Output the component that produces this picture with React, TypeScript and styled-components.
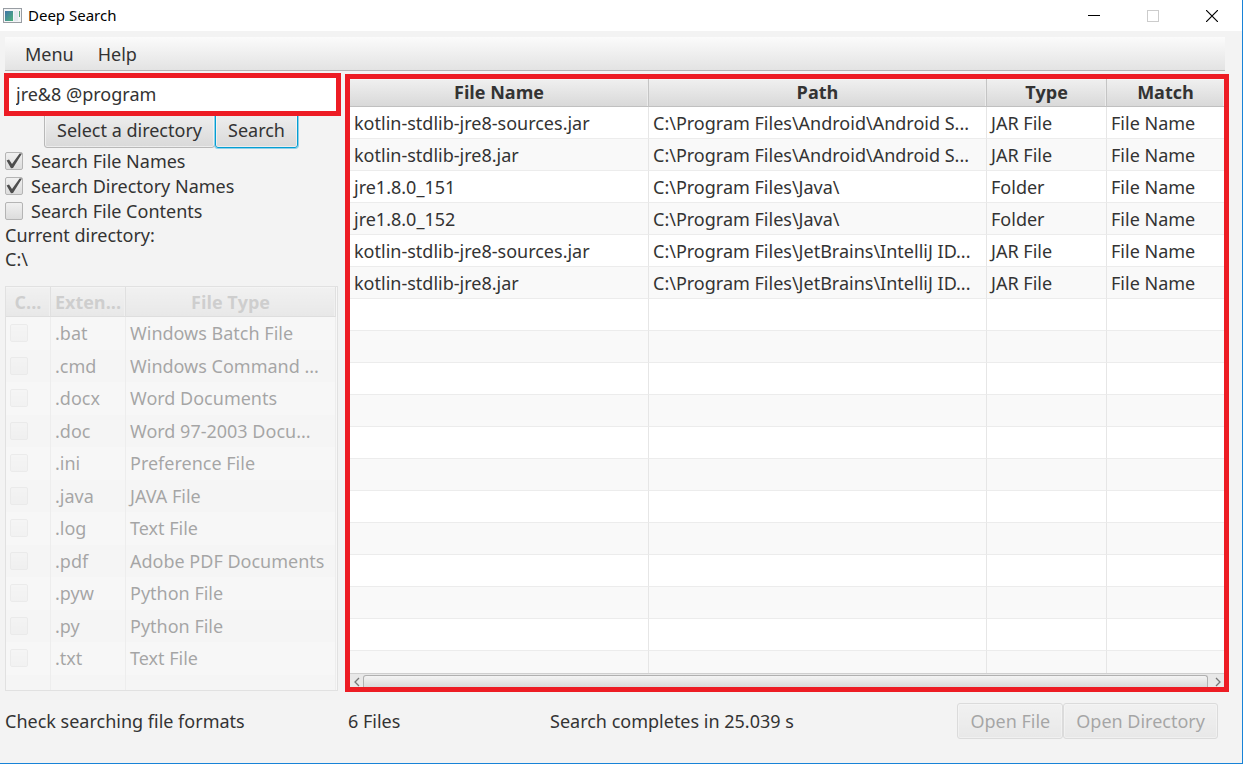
import React from "react";
import styled, { createGlobalStyle, css } from "styled-components";

const GlobalStyle = createGlobalStyle`
  *, *::before, *::after { box-sizing: border-box; }
  body { margin: 0; background: #f3f3f3; }
  button, input { font: inherit; color: inherit; }
`;

const Window = styled.div`
  display: flex;
  flex-direction: column;
  min-height: 100vh;
  border: solid #1883d7;
  border-width: 0 1px 1px 0;
  background: #f3f3f3;
  color: #333;
  font-family: "Noto Sans", "Open Sans", sans-serif;
  font-size: 18px;
  line-height: 24px;
`;

const TitleBar = styled.header`
  display: flex;
  align-items: center;
  height: 31px;
  padding: 0 1px 0 3px;
  background: #fff;
  color: #000;
`;

const Title = styled.h1`
  flex: 1;
  margin: 0 0 0 6px;
  padding-bottom: 2px;
  font-size: 15px;
  font-weight: 400;
  line-height: 20px;
`;

const CaptionButton = styled.button`
  display: flex;
  align-items: center;
  justify-content: center;
  width: 59px;
  height: 31px;
  padding: 0;
  border: 0;
  background: none;
`;

const MenuBar = styled.nav`
  display: flex;
  align-items: center;
  gap: 24px;
  height: 34px;
  margin: 6px 17px 0 5px;
  padding-left: 20px;
  border-bottom: 1px solid #b5b5b5;
  background: linear-gradient(#fbfbfb, #e3e3e3);
`;

const MenuButton = styled.button`
  padding: 0;
  border: 0;
  background: none;
`;

const Workspace = styled.main`
  display: flex;
  align-items: flex-start;
  gap: 4px;
  padding: 2px 13px 0 4px;
`;

const SearchPanel = styled.section`
  display: flex;
  flex-direction: column;
  flex: none;
  width: 337px;
`;

const SearchInput = styled.input`
  position: relative;
  z-index: 1;
  width: 100%;
  height: 43px;
  padding: 0 7px 2px;
  border: 5px solid #ed1c24;
  border-radius: 0;
  background: #fff;
  outline: none;
`;

const ButtonRow = styled.div`
  display: flex;
  margin: -4px 0 0 40px;
`;

const PushButton = styled.button<{ $focused?: boolean }>`
  height: 36px;
  padding: 0 12px;
  border: 1px solid #b8b8b8;
  border-radius: 3px;
  background: linear-gradient(#efefef, #d9d9d9);
  box-shadow: inset 0 0 0 1px #ffffff80;
  white-space: nowrap;

  ${(p) =>
    p.$focused &&
    css`
      border-color: #039ed3;
      box-shadow: 0 0 0 1px #8fd0e8, inset 0 0 0 1px #ffffff80;
    `}

  &:disabled {
    opacity: 0.4;
  }
`;

const CheckLabel = styled.label`
  display: flex;
  align-items: center;
  gap: 8px;
  height: 25px;
  margin-left: 1px;
`;

const BoxWrap = styled.span`
  position: relative;
  display: block;
  width: 18px;
  height: 18px;
`;

const Box = styled.input`
  display: block;
  appearance: none;
  width: 18px;
  height: 18px;
  margin: 0;
  border: 1px solid #b4b4b4;
  border-radius: 2px;
  background: linear-gradient(#f0f0f0, #dcdcdc);

  & + svg {
    position: absolute;
    inset: 0;
    display: none;
    pointer-events: none;
  }
  &:checked + svg {
    display: block;
  }
  &:disabled {
    opacity: 0.4;
  }
`;

const Info = styled.p`
  margin: 0 0 0 1px;
`;

const FormatsFrame = styled.div`
  margin: 15px 3px 0 1px;
  padding-right: 1px;
  border: 1px solid #c8c8c8;
  background: #fff;
  opacity: 0.4;
`;

const Table = styled.table`
  width: 100%;
  table-layout: fixed;
  border-collapse: separate;
  border-spacing: 0;

  th,
  td {
    overflow: hidden;
    white-space: nowrap;
    border-right: 1px solid #e6e6e6;
  }
  th {
    padding: 0;
    border-right-color: #c4c4c4;
    border-bottom: 1px solid #c0c0c0;
    background: linear-gradient(#f0f0f0, #d9d9d9);
    box-shadow: inset 0 1px 0 #f6f6f6, inset -1px 0 0 #ececec;
    font-family: "Open Sans", "Noto Sans", sans-serif;
    font-weight: 700;
  }
  td {
    padding: 0 4px;
    text-align: left;
  }
  tbody tr {
    background: #fff;
  }
  tbody tr:nth-child(even) {
    background: #f9f9f9;
  }
`;

const FormatsTable = styled(Table)`
  th {
    height: 30px;
    color: #999;
  }
  tbody tr {
    height: 32px;
  }
  tbody tr:nth-child(odd) {
    height: 33px;
  }
  tbody tr:nth-child(odd) td {
    padding-bottom: 1px;
  }
  tbody tr:last-child {
    height: 15px;
  }
`;

const ResultsPanel = styled.section`
  flex: 1;
  min-width: 0;
  margin-top: 1px;
  border: 5px solid #ed1c24;
`;

const ResultsTable = styled(Table)`
  th {
    height: 28px;
    padding-bottom: 2px;
  }
  tbody tr {
    height: 32px;
  }
  tbody td {
    border-bottom: 1px solid #ececec;
  }
  tbody tr:last-child {
    height: 22px;
  }
  tbody tr:last-child td {
    border-bottom: 0;
  }
  th:last-child,
  td:last-child {
    border-right: 0;
  }
`;

const Col = styled.col<{ $width?: number }>`
  width: ${(p) => (p.$width ? `${p.$width}px` : "auto")};
`;

const ScrollBar = styled.div`
  display: flex;
  height: 14px;
  border-top: 1px solid #cfcfcf;
  background: #e8e8e8;
`;

const ScrollArrow = styled.button`
  display: flex;
  align-items: center;
  justify-content: center;
  width: 13px;
  padding: 3px 0 0;
  border: 0;
  background: none;
`;

const ScrollThumb = styled.div`
  flex: 1;
  margin: 1px 3px 0 0;
  border: 1px solid #b0b0b0;
  border-bottom: 0;
  border-radius: 3px 3px 0 0;
  background: linear-gradient(#f4f4f4, #dadada);
`;

const StatusBar = styled.footer`
  display: grid;
  grid-template-columns: 343px 202px 1fr auto;
  align-items: center;
  margin-top: 11px;
  padding: 0 24px 24px 5px;
`;

const Actions = styled.div`
  display: flex;
`;

const Tick = () => (
  <svg width="18" height="18" viewBox="0 0 18 18" aria-hidden="true">
    <path d="M1.6 8.4 L4 7.6 L7 12 L14.6 1.6 L17 1.4 L8 16 L6 16.2 Z" fill="#4d4d4d" />
  </svg>
);

function Check({ label, checked }: { label: string; checked?: boolean }) {
  return (
    <CheckLabel>
      <BoxWrap>
        <Box type="checkbox" defaultChecked={checked} />
        <Tick />
      </BoxWrap>
      {label}
    </CheckLabel>
  );
}

const formats = [
  [".bat", "Windows Batch File"],
  [".cmd", "Windows Command ..."],
  [".docx", "Word Documents"],
  [".doc", "Word 97-2003 Docu..."],
  [".ini", "Preference File"],
  [".java", "JAVA File"],
  [".log", "Text File"],
  [".pdf", "Adobe PDF Documents"],
  [".pyw", "Python File"],
  [".py", "Python File"],
  [".txt", "Text File"],
];

const results = [
  ["kotlin-stdlib-jre8-sources.jar", "C:\\Program Files\\Android\\Android S...", "JAR File", "File Name"],
  ["kotlin-stdlib-jre8.jar", "C:\\Program Files\\Android\\Android S...", "JAR File", "File Name"],
  ["jre1.8.0_151", "C:\\Program Files\\Java\\", "Folder", "File Name"],
  ["jre1.8.0_152", "C:\\Program Files\\Java\\", "Folder", "File Name"],
  ["kotlin-stdlib-jre8-sources.jar", "C:\\Program Files\\JetBrains\\IntelliJ ID...", "JAR File", "File Name"],
  ["kotlin-stdlib-jre8.jar", "C:\\Program Files\\JetBrains\\IntelliJ ID...", "JAR File", "File Name"],
];

const emptyRows = Array.from({ length: 12 }, () => ["", "", "", ""]);

export default function App() {
  return (
    <Window>
      <GlobalStyle />
      <TitleBar>
        <svg width="19" height="16" viewBox="0 0 19 16" aria-hidden="true">
          <defs>
            <linearGradient id="screen" x1="0" y1="0" x2="1" y2="1">
              <stop offset="0" stopColor="#3f73a8" />
              <stop offset="1" stopColor="#4fb37a" />
            </linearGradient>
          </defs>
          <rect x="0.5" y="0.5" width="18" height="14" fill="#f4f5f6" stroke="#989da3" />
          <rect x="2" y="3" width="8" height="10" fill="url(#screen)" />
          <rect x="11" y="3" width="4" height="10" fill="#e4e8ee" />
          <rect x="16" y="3" width="1" height="6" fill="#5aa57c" />
        </svg>
        <Title>Deep Search</Title>
        <CaptionButton aria-label="Minimize">
          <svg width="12" height="12" viewBox="0 0 12 12">
            <path d="M0 5.5H12" stroke="#000" />
          </svg>
        </CaptionButton>
        <CaptionButton aria-label="Maximize" disabled>
          <svg width="12" height="12" viewBox="0 0 12 12">
            <rect x="0.5" y="0.5" width="11" height="11" fill="none" stroke="#ccc" />
          </svg>
        </CaptionButton>
        <CaptionButton aria-label="Close">
          <svg width="12" height="12" viewBox="0 0 12 12">
            <path d="M0 0L12 12M12 0L0 12" stroke="#000" strokeWidth="1.2" />
          </svg>
        </CaptionButton>
      </TitleBar>

      <MenuBar>
        <MenuButton>Menu</MenuButton>
        <MenuButton>Help</MenuButton>
      </MenuBar>

      <Workspace>
        <SearchPanel>
          <SearchInput aria-label="Search text" defaultValue="jre&8 @program" />
          <ButtonRow>
            <PushButton>Select a directory</PushButton>
            <PushButton $focused>Search</PushButton>
          </ButtonRow>
          <Check label="Search File Names" checked />
          <Check label="Search Directory Names" checked />
          <Check label="Search File Contents" />
          <Info>Current directory:</Info>
          <Info>C:\</Info>

          <FormatsFrame>
            <FormatsTable>
              <colgroup>
                <Col $width={45} />
                <Col $width={75} />
                <Col />
              </colgroup>
              <thead>
                <tr>
                  <th>C...</th>
                  <th>Exten...</th>
                  <th>File Type</th>
                </tr>
              </thead>
              <tbody>
                {formats.map(([ext, type]) => (
                  <tr key={ext}>
                    <td>
                      <Box type="checkbox" disabled aria-label={`Include ${ext}`} />
                    </td>
                    <td>{ext}</td>
                    <td>{type}</td>
                  </tr>
                ))}
                <tr>
                  <td />
                  <td />
                  <td />
                </tr>
              </tbody>
            </FormatsTable>
          </FormatsFrame>
        </SearchPanel>

        <ResultsPanel>
          <ResultsTable>
            <colgroup>
              <Col $width={299} />
              <Col />
              <Col $width={120} />
              <Col $width={117} />
            </colgroup>
            <thead>
              <tr>
                <th>File Name</th>
                <th>Path</th>
                <th>Type</th>
                <th>Match</th>
              </tr>
            </thead>
            <tbody>
              {[...results, ...emptyRows].map((row, i) => (
                <tr key={i}>
                  {row.map((cell, j) => (
                    <td key={j}>{cell}</td>
                  ))}
                </tr>
              ))}
            </tbody>
          </ResultsTable>
          <ScrollBar>
            <ScrollArrow aria-label="Scroll left">
              <svg width="6" height="10" viewBox="0 0 6 10">
                <path d="M5 1L1 5L5 9" fill="none" stroke="#777" strokeWidth="1.3" />
              </svg>
            </ScrollArrow>
            <ScrollThumb />
            <ScrollArrow aria-label="Scroll right">
              <svg width="6" height="10" viewBox="0 0 6 10">
                <path d="M1 1L5 5L1 9" fill="none" stroke="#777" strokeWidth="1.3" />
              </svg>
            </ScrollArrow>
          </ScrollBar>
        </ResultsPanel>
      </Workspace>

      <StatusBar>
        <span>Check searching file formats</span>
        <span>6 Files</span>
        <span>Search completes in 25.039 s</span>
        <Actions>
          <PushButton disabled>Open File</PushButton>
          <PushButton disabled>Open Directory</PushButton>
        </Actions>
      </StatusBar>
    </Window>
  );
}
